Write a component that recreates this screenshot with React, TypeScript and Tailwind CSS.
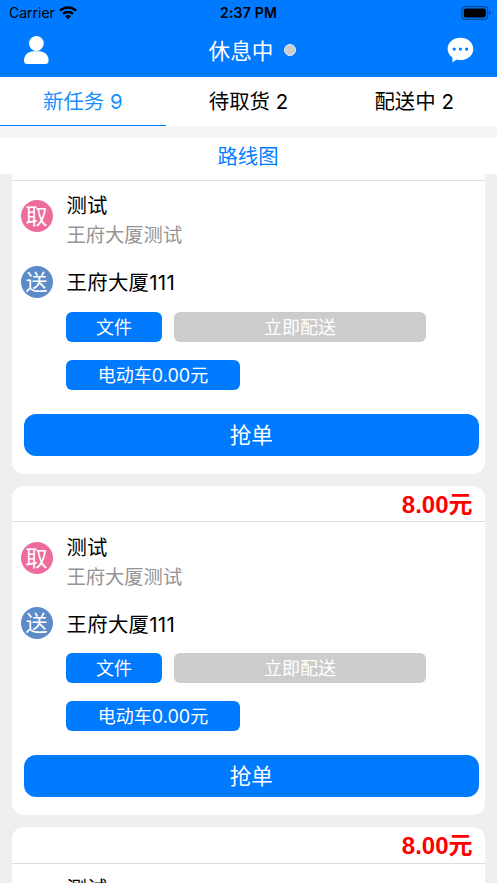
interface Order {
  id: number;
  price: string;
  pickupName: string;
  pickupAddress: string;
  deliveryAddress: string;
  goods: string;
  deliveryTime: string;
  vehicle: string;
}

interface Tab {
  key: string;
  label: string;
  count: number;
}

const TABS: Tab[] = [
  { key: 'new', label: '新任务', count: 9 },
  { key: 'pickup', label: '待取货', count: 2 },
  { key: 'delivering', label: '配送中', count: 2 }
];

const ORDERS: Order[] = [1, 2, 3].map((id) => ({
  id,
  price: '8.00',
  pickupName: '测试',
  pickupAddress: '王府大厦测试',
  deliveryAddress: '王府大厦111',
  goods: '文件',
  deliveryTime: '立即配送',
  vehicle: '电动车0.00元'
}));

function StatusBar() {
  return (
    <div className="grid h-[25px] shrink-0 grid-cols-3 items-center text-black">
      <div className="flex items-center gap-1 pl-[9px] text-[14px] leading-[25px]">
        <span>Carrier</span>
        <svg className="h-[14px] w-[18px]" viewBox="0 0 18 14" fill="none" stroke="currentColor">
          <path d="M1 4.700a11.400 11.400 0 0 1 16 0" strokeWidth="2.500" />
          <path d="M4 8a7.200 7.200 0 0 1 10 0" strokeWidth="2.300" />
          <path d="M9 13.200 6.100 10.300a4.200 4.200 0 0 1 5.800 0Z" fill="currentColor" stroke="none" />
        </svg>
      </div>
      <div className="text-center text-[14px] font-semibold leading-[25px] tracking-[0.2px]">2:37 PM</div>
      <div className="flex justify-end pr-[6px]">
        <svg className="h-[14px] w-[30px]" viewBox="0 0 30 14">
          <rect x="1" y="0.600" width="25.600" height="12.800" rx="3.400" fill="none" stroke="#000" strokeOpacity=".4" strokeWidth="1.200" />
          <rect x="2.800" y="2.400" width="22" height="9.200" rx="2" />
          <path d="M28 4.800c2 .7 2 3.700 0 4.400Z" fillOpacity=".5" />
        </svg>
      </div>
    </div>
  );
}

function Header() {
  return (
    <header className="flex h-[77px] shrink-0 flex-col bg-[#007aff]">
      <StatusBar />
      <div className="flex h-[50px] items-center justify-between pl-6 pr-[23px]">
        <svg className="h-7 w-[25px]" viewBox="0 0 25 28" fill="white">
          <circle cx="12.400" cy="7.500" r="7.400" />
          <path d="M0 24.700c0-6 4.400-9.400 9.500-9.400h5.600c5.200 0 9.500 3.400 9.500 9.400 0 2.400-1.300 3.200-3.300 3.200h-18C1.300 27.900 0 27.100 0 24.700Z" />
        </svg>
        <div className="flex items-center gap-[11px] pl-[9px] text-[21.6px] leading-[48px] text-white">
          <span className="pt-[2px]">休息中</span>
          <span className="size-3 rounded-full border border-[#e5edf8] bg-[#ccc]" />
        </div>
        <svg className="h-[26px] w-[27px]" viewBox="0 0 27 26">
          <path
            d="M13.400 .7c7.200 0 12.900 4.800 12.900 11.300s-5.700 11.100-12.900 11.100c-1.300 0-2.600-.1-3.800-.5L5.500 25.500l-.1-5C2.500 18.500 .6 15.600 .6 12c0-6.500 5.600-11.300 12.800-11.300Z"
            fill="white"
          />
          <g fill="#007aff">
            <circle cx="7.200" cy="12.100" r="1.600" />
            <circle cx="13.400" cy="12.100" r="1.600" />
            <circle cx="19.600" cy="12.100" r="1.600" />
          </g>
        </svg>
      </div>
    </header>
  );
}

function TabBar({ active }: { active: string }) {
  return (
    <nav className="grid h-[49px] shrink-0 grid-cols-3 bg-white text-center text-[20.4px] leading-[46px]">
      {TABS.map((tab) => (
        <div key={tab.key} className="flex flex-col pt-[2px]">
          <span className={tab.key === active ? 'text-[#1890ff]' : 'text-black'}>
            {tab.label} {tab.count}
          </span>
          {tab.key === active && <span className="h-px bg-[#007aff]" />}
        </div>
      ))}
    </nav>
  );
}

function StopBadge({ type }: { type: 'pickup' | 'delivery' }) {
  const color = type === 'pickup' ? 'bg-[#ee6b9e]' : 'bg-[#5d8bca]';
  return (
    <span
      className={`flex size-8 shrink-0 items-center justify-center rounded-full pt-px text-[22px] leading-[31px] text-white ${color}`}
    >
      {type === 'pickup' ? '取' : '送'}
    </span>
  );
}

function OrderCard({ order }: { order: Order }) {
  return (
    <article className="h-[329.5px] shrink-0 rounded-[12px] bg-white">
      <div className="h-[36.5px] border-b border-[#dcdfe0] pr-[12.5px] pt-px text-right font-['Liberation_Sans','Noto_Sans_CJK_SC',sans-serif] text-[24px] font-bold leading-[35px] text-[#f00]">
        {order.price}元
      </div>

      {/* Pickup */}
      <div className="flex h-[71px] items-center gap-[14px] pl-[8.5px]">
        <StopBadge type="pickup" />
        <div className="pt-[9px]">
          <div className="text-[20.4px] leading-[30px] text-black">{order.pickupName}</div>
          <div className="text-[19.3px] leading-[29px] text-[#949494]">{order.pickupAddress}</div>
        </div>
      </div>

      {/* Delivery */}
      <div className="flex h-[60px] items-center gap-[14px] pl-[8.5px]">
        <StopBadge type="delivery" />
        <div className="pt-[3px] text-[20.4px] leading-[30px] tracking-[0.3px] text-black">
          {order.deliveryAddress}
        </div>
      </div>

      <div className="flex flex-col gap-[18px] pl-[54px] text-center text-[18px] leading-[30px] text-white">
        <div className="flex gap-3">
          <span className="h-[30px] w-24 rounded-[6px] bg-[#007aff] pt-px">{order.goods}</span>
          <span className="h-[30px] w-[252px] rounded-[6px] bg-[#ccc] pt-px">{order.deliveryTime}</span>
        </div>
        <span className="h-[30px] w-[174px] rounded-[6px] bg-[#007aff] pt-px">{order.vehicle}</span>
      </div>

      <div className="ml-3 mt-6 h-[42px] w-[454.5px] rounded-[12px] bg-[#007aff] text-center text-[21.6px] leading-[42px] text-white">
        抢单
      </div>
    </article>
  );
}

export default function App() {
  return (
    <div className="flex h-[883px] w-[497px] flex-col overflow-hidden bg-[#eeeff1] font-[Inter,'Noto_Sans_CJK_SC',sans-serif]">
      <Header />
      <TabBar active="new" />
      <div className="h-3 shrink-0 bg-[#f5f5f5]" />
      <div className="h-9 shrink-0 bg-white pr-px pt-[2px] text-center text-[20.4px] leading-[34px] text-[#007aff]">
        路线图
      </div>

      {/* Order list, scrolled a little under the route bar */}
      <main className="min-h-0 flex-1 overflow-hidden px-3">
        <div className="-mt-[30px] flex flex-col gap-3">
          {ORDERS.map((order) => (
            <OrderCard key={order.id} order={order} />
          ))}
        </div>
      </main>
    </div>
  );
}
